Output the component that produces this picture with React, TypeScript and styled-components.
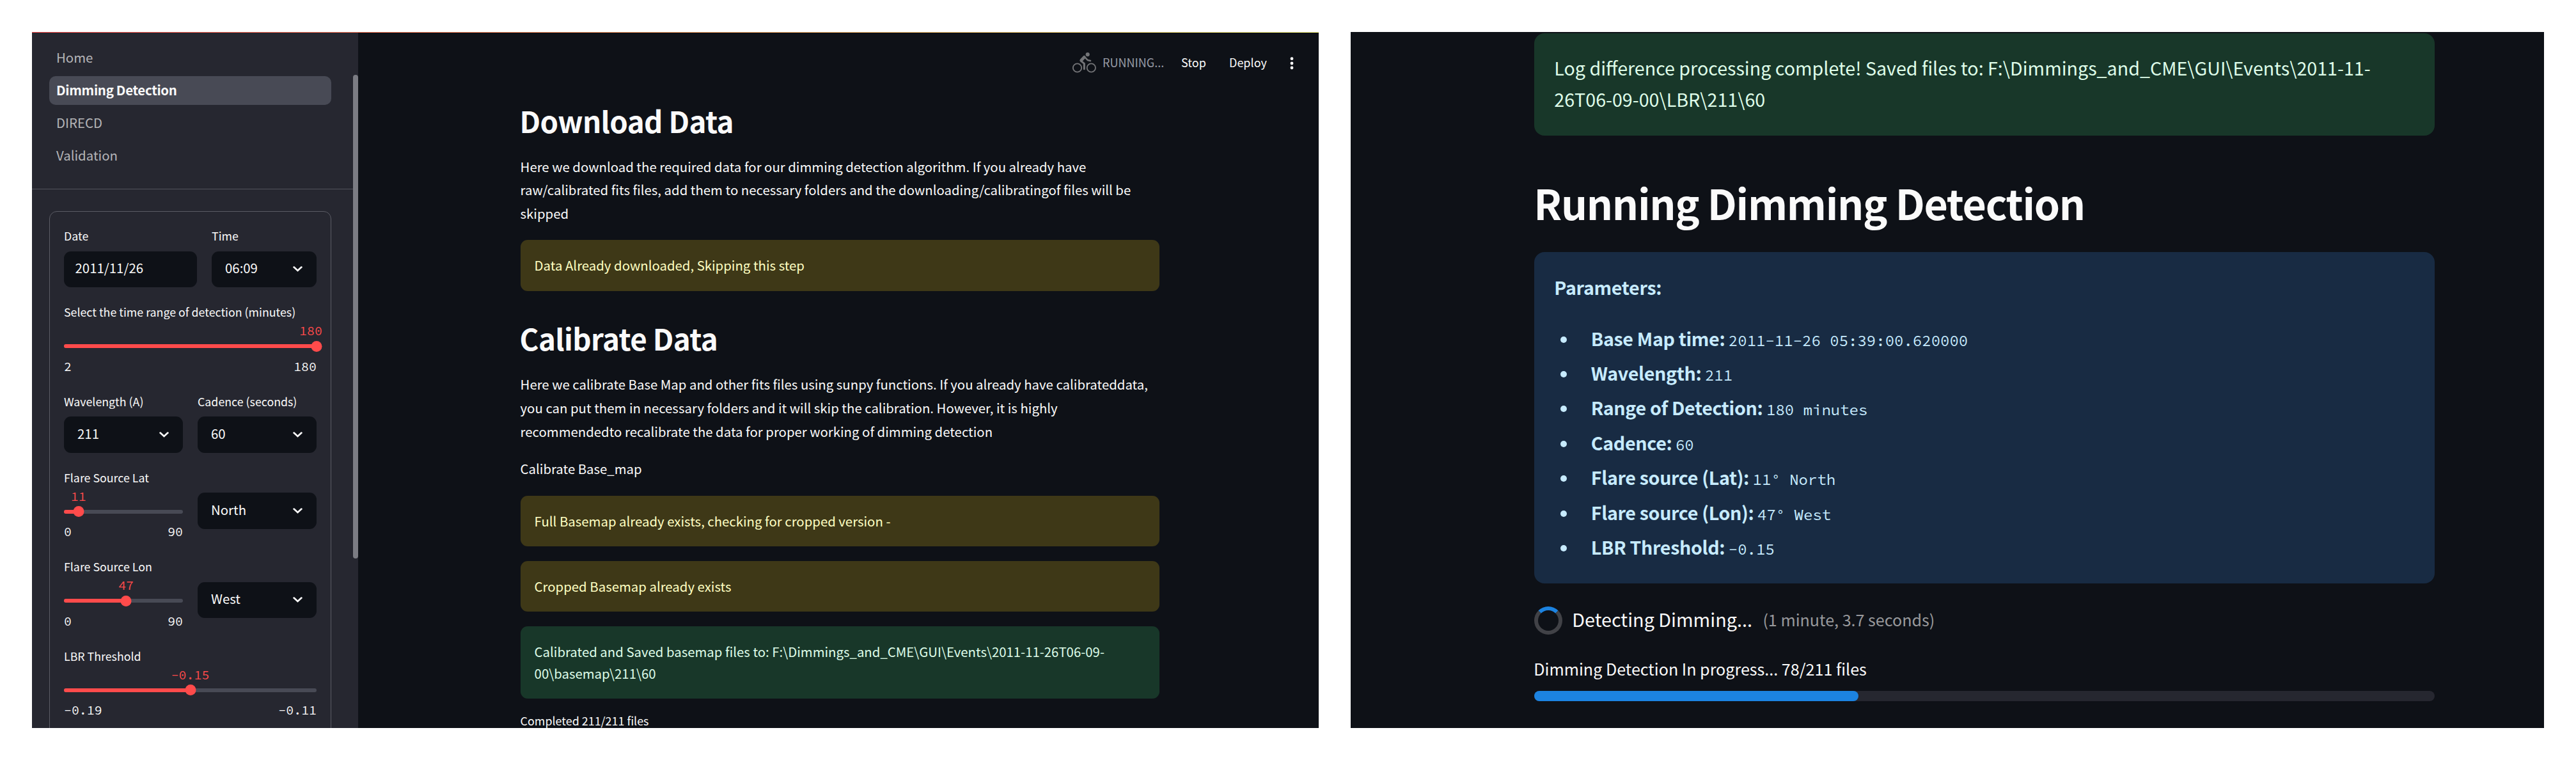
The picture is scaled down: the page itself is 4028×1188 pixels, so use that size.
import React from 'react';
import styled, { createGlobalStyle, css } from 'styled-components';

const sans = '"Noto Sans CJK SC", "Noto Sans", sans-serif';
const mono = '"Source Code Pro", "Liberation Mono", monospace';

const GlobalStyle = createGlobalStyle`
  * { box-sizing: border-box; }
  body { margin: 0; background: #fff; }
`;

const Page = styled.main`
  display: flex;
  gap: 50px;
  width: 4028px;
  height: 1188px;
  padding: 50px;
  background: #ffffff;
  font-family: ${sans};
  color: #fafafa;
`;

const Window = styled.section<{ $width: number }>`
  position: relative;
  display: flex;
  flex: none;
  width: ${p => p.$width}px;
  height: 1088px;
  overflow: hidden;
  background: #0e1117;
`;

const Decoration = styled.div`
  position: absolute;
  inset: 0 0 auto 0;
  height: 1px;
  background: linear-gradient(90deg, #ff4b4b, #fffd80);
`;

/* ---------- sidebar ---------- */

const Sidebar = styled.aside`
  display: flex;
  flex: none;
  width: 510px;
  height: 1088px;
  background: #262730;
`;

const SidebarScroll = styled.div`
  width: 502px;
  height: 1088px;
  overflow: hidden;
`;

const ScrollTrack = styled.div`
  width: 8px;
  padding-top: 67px;
`;

const ScrollThumb = styled.div`
  height: 756px;
  border-radius: 4px;
  background: #7b7c83;
`;

const Nav = styled.nav`
  display: flex;
  flex-direction: column;
  gap: 6px;
  height: 246px;
  padding: 18px 34px 0 27px;
  border-bottom: 1px solid #53545d;
`;

const NavItem = styled.a<{ $active?: boolean }>`
  height: 45px;
  padding: 0 11px;
  border-radius: 10px;
  font-size: 20.4px;
  line-height: 42.4px;
  color: #b5b5b8;
  ${p => p.$active && css`
    background: #484a55;
    color: #fafafa;
    font-weight: 700;
    letter-spacing: -0.014em;
  `}
`;

const Form = styled.form`
  display: flex;
  flex-direction: column;
  gap: 24px;
  width: 441px;
  height: 900px;
  margin: 34px 0 0 27px;
  padding: 23px 22px 0;
  border: 1px solid #5b5c65;
  border-radius: 12px;
`;

const FieldRow = styled.div<{ $columns: string }>`
  display: grid;
  grid-template-columns: ${p => p.$columns};
  column-gap: 23px;
`;

const Field = styled.div`
  min-width: 0;
`;

const Label = styled.div`
  height: 30px;
  font-size: 17.8px;
  line-height: 29.4px;
  white-space: nowrap;
`;

const Control = styled.div<{ $inset: number }>`
  display: flex;
  align-items: center;
  justify-content: space-between;
  height: 56.5px;
  margin-top: 8.5px;
  padding: 0 22px 0 ${p => p.$inset}px;
  border-radius: 11px;
  background: #0e1117;
  font-size: 20.4px;
  line-height: 53.6px;
`;

const ControlText = styled.span`
  height: 57px;
`;

const SliderBody = styled.div`
  height: 85.5px;
  padding-top: 35px;
  font: 19.9px/20px ${mono};
`;

const Track = styled.div`
  position: relative;
  height: 6px;
  border-radius: 3px;
  background: #484a55;
`;

const Fill = styled.div`
  height: 6px;
  border-radius: 3px;
  background: #ff4b4b;
`;

const Thumb = styled.div<{ $valueShift: number }>`
  position: absolute;
  top: -5.5px;
  width: 17px;
  height: 17px;
  border-radius: 50%;
  background: #ff4b4b;
  transform: translateX(-50%);
  & > span {
    position: absolute;
    left: 50%;
    bottom: 22.5px;
    color: #ff4b4b;
    transform: translateX(calc(-50% + ${p => p.$valueShift}px));
  }
`;

const Range = styled.div`
  display: flex;
  justify-content: space-between;
  padding-top: 18.5px;
`;

/* ---------- main column ---------- */

const MainArea = styled.div`
  flex: 1;
  min-width: 0;
`;

const Toolbar = styled.header`
  display: flex;
  align-items: flex-start;
  height: 107.6px;
  padding: 32px 39px 0 0;
  justify-content: flex-end;
  font-size: 18px;
  line-height: 31px;
`;

const StatusLabel = styled.span`
  width: 123px;
  margin-left: 10px;
  color: #979ba6;
`;

const ToolbarButton = styled.span<{ $width: number }>`
  width: ${p => p.$width}px;
`;

const Content = styled.div`
  width: 999px;
  margin-left: 253.6px;
`;

const Heading = styled.h2<{ $size: number; $line: number; $top: number; $track: number }>`
  margin: ${p => p.$top}px 0 0 -1px;
  font-size: ${p => p.$size}px;
  line-height: ${p => p.$line}px;
  font-weight: 700;
  letter-spacing: ${p => p.$track}em;
  white-space: nowrap;
`;

const Paragraph = styled.p<{ $top: number }>`
  margin: ${p => p.$top}px 0 0;
  font-size: 20.36px;
  line-height: 36.6px;
  white-space: nowrap;
`;

const tones = {
  warning: { bg: '#3e3817', fg: '#ffffc2' },
  success: { bg: '#183729', fg: '#dffde9' },
  info: { bg: '#182b43', fg: '#c7ebff' },
};

const Alert = styled.div<{ $tone: keyof typeof tones; $top: number }>`
  margin-top: ${p => p.$top}px;
  padding: 22px 22px 23.4px;
  border-radius: 11px;
  background: ${p => tones[p.$tone].bg};
  color: ${p => tones[p.$tone].fg};
  font-size: 20.38px;
  line-height: 34px;
  white-space: nowrap;
`;

const ProgressLabel = styled.div`
  margin-top: 19px;
  font-size: 17.9px;
  line-height: 30px;
`;

/* ---------- right window ---------- */

const ZoomedContent = styled.div`
  width: 1407.5px;
  margin-left: 287.3px;
  padding-top: 2px;
`;

const LargeAlert = styled(Alert)<{ $pad: string }>`
  padding: ${p => p.$pad};
  border-radius: 16px;
  font-size: 28.65px;
  line-height: 48.5px;
`;

const ParamTitle = styled.strong`
  display: block;
  letter-spacing: -0.01em;
`;

const ParamList = styled.ul`
  margin: 28.6px 0 0;
  padding: 0;
  list-style: none;
`;

const ParamItem = styled.li`
  display: flex;
  align-items: baseline;
  height: 54.4px;
  line-height: 54.4px;
  &::before {
    content: '';
    width: 10px;
    height: 10px;
    margin: 0 37.5px 0 10px;
    border-radius: 50%;
    background: currentColor;
    transform: translateY(-5px);
  }
  strong { letter-spacing: -0.012em; }
`;

const Code = styled.code`
  margin-left: 5.5px;
  font: 24px/40px ${mono};
  white-space: pre;
`;

const SpinnerRow = styled.div`
  display: flex;
  align-items: center;
  height: 48.5px;
  margin-top: 31.3px;
  line-height: 48.5px;
`;

const Spinner = styled.i`
  width: 44px;
  height: 44px;
  margin-top: 4px;
  border: 6px solid #414247;
  border-top-color: #1c83e1;
  border-radius: 50%;
`;

const SpinnerText = styled.span`
  margin-left: 15px;
  font-size: 28.75px;
`;

const Elapsed = styled.span`
  margin-left: 16.5px;
  font-size: 25.1px;
  color: #98999c;
`;

const Status = styled.div`
  margin: 32px 0 0 -1px;
  font-size: 25.1px;
  line-height: 42px;
`;

const Bar = styled.div`
  height: 16px;
  margin-top: 14px;
  border-radius: 8px;
  background: #262730;
`;

const BarFill = styled.div`
  height: 16px;
  border-radius: 8px;
  background: #1c83e1;
`;

/* ---------- icons ---------- */

const Chevron = () => (
  <svg width="15" height="9" viewBox="0 0 15 9" fill="none">
    <path d="M1.6 1.6 7.5 6.9 13.4 1.6" stroke="#fafafa" strokeWidth="2.7" strokeLinecap="round" />
  </svg>
);

const Cyclist = () => (
  <svg width="37.4" height="32" viewBox="33 38 112 96" fill="none" stroke="#737477" strokeLinecap="round" strokeLinejoin="round">
    <circle cx="55.5" cy="110" r="20" strokeWidth="5.5" />
    <circle cx="121" cy="110" r="20" strokeWidth="5.5" />
    <circle cx="104" cy="47.5" r="9.2" fill="#737477" stroke="none" />
    <path d="M74 75 88 60" strokeWidth="14" />
    <path d="M73 78 88 90V115" strokeWidth="9" />
    <path d="M91 60 104 74 117 77" strokeWidth="7.5" />
  </svg>
);

const Kebab = () => (
  <svg width="6" height="30" viewBox="0 0 6 30" fill="#fafafa">
    <circle cx="3" cy="9.7" r="2.4" />
    <circle cx="3" cy="17" r="2.4" />
    <circle cx="3" cy="24" r="2.4" />
  </svg>
);

/* ---------- composed parts ---------- */

const Select = ({ value }: { value: string }) => (
  <Control $inset={21}>
    <ControlText>{value}</ControlText>
    <Chevron />
  </Control>
);

type SliderProps = { label: string; value: string; min: string; max: string; percent: number; shift?: number };

const Slider = ({ label, value, min, max, percent, shift = 0 }: SliderProps) => (
  <Field>
    <Label>{label}</Label>
    <SliderBody>
      <Track>
        <Fill style={{ width: `${percent}%` }} />
        <Thumb $valueShift={shift} style={{ left: `${percent}%` }}><span>{value}</span></Thumb>
      </Track>
      <Range><span>{min}</span><span>{max}</span></Range>
    </SliderBody>
  </Field>
);

const params: [string, string][] = [
  ['Base Map time:', '2011-11-26 05:39:00.620000'],
  ['Wavelength:', '211'],
  ['Range of Detection:', '180 minutes'],
  ['Cadence:', '60'],
  ['Flare source (Lat):', '11° North'],
  ['Flare source (Lon):', '47° West'],
  ['LBR Threshold:', '-0.15'],
];

export default function App() {
  return (
    <Page>
      <GlobalStyle />
      <Window $width={2012}>
        <Sidebar>
          <SidebarScroll>
            <Nav>
              <NavItem>Home</NavItem>
              <NavItem $active>Dimming Detection</NavItem>
              <NavItem>DIRECD</NavItem>
              <NavItem>Validation</NavItem>
            </Nav>
            <Form>
              <FieldRow $columns="208px 164px">
                <Field>
                  <Label>Date</Label>
                  <Control $inset={17.5}><ControlText>2011/11/26</ControlText></Control>
                </Field>
                <Field>
                  <Label>Time</Label>
                  <Select value="06:09" />
                </Field>
              </FieldRow>
              <Slider label="Select the time range of detection (minutes)" value="180" min="2" max="180" percent={100} shift={-9} />
              <FieldRow $columns="186px 186px">
                <Field><Label>Wavelength (A)</Label><Select value="211" /></Field>
                <Field><Label>Cadence (seconds)</Label><Select value="60" /></Field>
              </FieldRow>
              <FieldRow $columns="186px 186px">
                <Slider label="Flare Source Lat" value="11" min="0" max="90" percent={(11 / 90) * 100} />
                <Field><Label /><Select value="North" /></Field>
              </FieldRow>
              <FieldRow $columns="186px 186px">
                <Slider label="Flare Source Lon" value="47" min="0" max="90" percent={(47 / 90) * 100} />
                <Field><Label /><Select value="West" /></Field>
              </FieldRow>
              <Slider label="LBR Threshold" value="-0.15" min="-0.19" max="-0.11" percent={50} />
            </Form>
          </SidebarScroll>
          <ScrollTrack><ScrollThumb /></ScrollTrack>
        </Sidebar>
        <MainArea>
          <Toolbar>
            <Cyclist />
            <StatusLabel>RUNNING...</StatusLabel>
            <ToolbarButton $width={75}>Stop</ToolbarButton>
            <ToolbarButton $width={95}>Deploy</ToolbarButton>
            <Kebab />
          </Toolbar>
          <Content>
            <Heading $size={45.7} $line={61} $top={0} $track={-0.014}>Download Data</Heading>
            <Paragraph $top={23.2}>
              Here we download the required data for our dimming detection algorithm. If you already have<br />
              raw/calibrated fits files, add them to necessary folders and the downloading/calibratingof files will be<br />
              skipped
            </Paragraph>
            <Alert $tone="warning" $top={23.7}>Data Already downloaded, Skipping this step</Alert>
            <Heading $size={45.7} $line={61} $top={43.6} $track={-0.014}>Calibrate Data</Heading>
            <Paragraph $top={23.2}>
              Here we calibrate Base Map and other fits files using sunpy functions. If you already have calibrateddata,<br />
              you can put them in necessary folders and it will skip the calibration. However, it is highly<br />
              recommendedto recalibrate the data for proper working of dimming detection
            </Paragraph>
            <Paragraph $top={21.8}>Calibrate Base_map</Paragraph>
            <Alert $tone="warning" $top={24.1}>Full Basemap already exists, checking for cropped version -</Alert>
            <Alert $tone="warning" $top={22.7}>Cropped Basemap already exists</Alert>
            <Alert $tone="success" $top={22.7}>
              Calibrated and Saved basemap files to: F:\Dimmings_and_CME\GUI\Events\2011-11-26T06-09-<br />
              00\basemap\211\60
            </Alert>
            <ProgressLabel>Completed 211/211 files</ProgressLabel>
          </Content>
        </MainArea>
        <Decoration />
      </Window>
      <Window $width={1866}>
        <ZoomedContent>
          <LargeAlert $tone="success" $top={0} $pad="30px 31px 33px">
            Log difference processing complete! Saved files to: F:\Dimmings_and_CME\GUI\Events\2011-11-<br />
            26T06-09-00\LBR\211\60
          </LargeAlert>
          <Heading $size={64.5} $line={86} $top={61} $track={-0.02}>Running Dimming Detection</Heading>
          <LargeAlert $tone="info" $top={35} $pad="30.6px 31px 29.8px">
            <ParamTitle>Parameters:</ParamTitle>
            <ParamList>
              {params.map(([name, value]) => (
                <ParamItem key={name}><strong>{name}</strong><Code>{value}</Code></ParamItem>
              ))}
            </ParamList>
          </LargeAlert>
          <SpinnerRow>
            <Spinner />
            <SpinnerText>Detecting Dimming...</SpinnerText>
            <Elapsed>(1 minute, 3.7 seconds)</Elapsed>
          </SpinnerRow>
          <Status>Dimming Detection In progress... 78/211 files</Status>
          <Bar><BarFill style={{ width: '36%' }} /></Bar>
        </ZoomedContent>
      </Window>
    </Page>
  );
}
